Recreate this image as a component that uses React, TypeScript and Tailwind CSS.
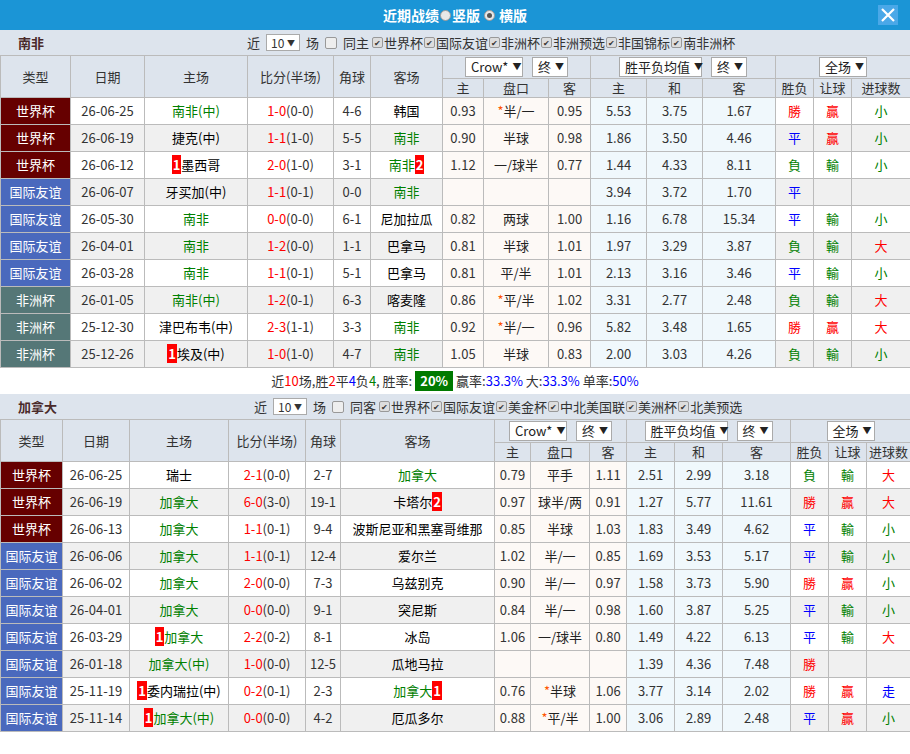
import React from 'react';

type Row = {
  t: string; d: string; h: string; hg?: boolean; hr?: string; ha?: string;
  s: string; hs: string; c: string; a: string; ag?: boolean; ar?: string;
  o1: string; p: string; o2: string; e1: string; e2: string; e3: string;
  r1: string; r2: string; r3: string;
};

const typeBg: Record<string, string> = {
  世界杯: 'bg-[#660000]',
  国际友谊: 'bg-[#4a69bd]',
  非洲杯: 'bg-[#557777]',
};

const resColor: Record<string, string> = {
  勝: 'text-[#f00]', 負: 'text-[#008000]', 平: 'text-[#00f]',
  贏: 'text-[#f00]', 輸: 'text-[#008000]', 走: 'text-[#00f]',
  大: 'text-[#f00]', 小: 'text-[#008000]',
};

const r = (t: string, d: string, h: string, s: string, hs: string, c: string, a: string, odds: string, euro: string, res: string, x: Partial<Row> = {}): Row => {
  const [o1, p, o2] = odds ? odds.split(' ') : ['', '', ''];
  const [e1, e2, e3] = euro.split(' ');
  const [r1 = '', r2 = '', r3 = ''] = res.split(' ');
  return { t, d, h, s, hs, c, a, o1, p, o2, e1, e2, e3, r1, r2, r3, ...x };
};

const rowsA: Row[] = [
  r('世界杯', '26-06-25', '南非(中)', '1-0', '(0-0)', '4-6', '韩国', '0.93 *半/一 0.95', '5.53 3.75 1.67', '勝 贏 小', { hg: true }),
  r('世界杯', '26-06-19', '捷克(中)', '1-1', '(1-0)', '5-5', '南非', '0.90 半球 0.98', '1.86 3.50 4.46', '平 贏 小', { ag: true }),
  r('世界杯', '26-06-12', '墨西哥', '2-0', '(1-0)', '3-1', '南非', '1.12 一/球半 0.77', '1.44 4.33 8.11', '負 輸 小', { ag: true, hr: '1', ar: '2' }),
  r('国际友谊', '26-06-07', '牙买加(中)', '1-1', '(0-1)', '0-0', '南非', '', '3.94 3.72 1.70', '平', { ag: true }),
  r('国际友谊', '26-05-30', '南非', '0-0', '(0-0)', '6-1', '尼加拉瓜', '0.82 两球 1.00', '1.16 6.78 15.34', '平 輸 小', { hg: true }),
  r('国际友谊', '26-04-01', '南非', '1-2', '(0-0)', '1-1', '巴拿马', '0.81 半球 1.01', '1.97 3.29 3.87', '負 輸 大', { hg: true }),
  r('国际友谊', '26-03-28', '南非', '1-1', '(0-1)', '5-1', '巴拿马', '0.81 平/半 1.01', '2.13 3.16 3.46', '平 輸 小', { hg: true }),
  r('非洲杯', '26-01-05', '南非(中)', '1-2', '(0-1)', '6-3', '喀麦隆', '0.86 *平/半 1.02', '3.31 2.77 2.48', '負 輸 大', { hg: true }),
  r('非洲杯', '25-12-30', '津巴布韦(中)', '2-3', '(1-1)', '3-3', '南非', '0.92 *半/一 0.96', '5.82 3.48 1.65', '勝 贏 大', { ag: true }),
  r('非洲杯', '25-12-26', '埃及(中)', '1-0', '(1-0)', '4-7', '南非', '1.05 半球 0.83', '2.00 3.03 4.26', '負 輸 小', { ag: true, hr: '1' }),
];

const rowsB: Row[] = [
  r('世界杯', '26-06-25', '瑞士', '2-1', '(0-0)', '2-7', '加拿大', '0.79 平手 1.11', '2.51 2.99 3.18', '負 輸 大', { ag: true }),
  r('世界杯', '26-06-19', '加拿大', '6-0', '(3-0)', '19-1', '卡塔尔', '0.97 球半/两 0.91', '1.27 5.77 11.61', '勝 贏 大', { hg: true, ar: '2' }),
  r('世界杯', '26-06-13', '加拿大', '1-1', '(0-1)', '9-4', '波斯尼亚和黑塞哥维那', '0.85 半球 1.03', '1.83 3.49 4.62', '平 輸 小', { hg: true }),
  r('国际友谊', '26-06-06', '加拿大', '1-1', '(0-1)', '12-4', '爱尔兰', '1.02 半/一 0.85', '1.69 3.53 5.17', '平 輸 小', { hg: true }),
  r('国际友谊', '26-06-02', '加拿大', '2-0', '(0-0)', '7-3', '乌兹别克', '0.90 半/一 0.97', '1.58 3.73 5.90', '勝 贏 小', { hg: true }),
  r('国际友谊', '26-04-01', '加拿大', '0-0', '(0-0)', '9-1', '突尼斯', '0.84 半/一 0.98', '1.60 3.87 5.25', '平 輸 小', { hg: true }),
  r('国际友谊', '26-03-29', '加拿大', '2-2', '(0-2)', '8-1', '冰岛', '1.06 一/球半 0.80', '1.49 4.22 6.13', '平 輸 大', { hg: true, hr: '1' }),
  r('国际友谊', '26-01-18', '加拿大(中)', '1-0', '(0-0)', '12-5', '瓜地马拉', '', '1.39 4.36 7.48', '勝', { hg: true }),
  r('国际友谊', '25-11-19', '委内瑞拉(中)', '0-2', '(0-1)', '2-3', '加拿大', '0.76 *半球 1.06', '3.77 3.14 2.02', '勝 贏 走', { ag: true, hr: '1', ar: '1' }),
  r('国际友谊', '25-11-14', '加拿大(中)', '0-0', '(0-0)', '4-2', '厄瓜多尔', '0.88 *平/半 1.00', '3.06 2.89 2.48', '平 贏 小', { hg: true, hr: '1' }),
];

function Rank({ n }: { n: string }) {
  return <span className="bg-[#f00] px-[1px] font-bold text-white">{n}</span>;
}

function Sel({ label, w }: { label: string; w: string }) {
  return (
    <span className={`inline-flex h-[20px] items-center justify-between whitespace-nowrap border border-[#aaa] bg-white px-[5px] text-[13px] text-[#222] ${w}`}>
      <span>{label}</span>
      <span className="ml-1 text-[9px]">▼</span>
    </span>
  );
}

function Check({ label }: { label: string }) {
  return (
    <span className="inline-flex items-center whitespace-nowrap">
      <span className="mr-[1px] inline-flex h-[11px] w-[11px] items-center justify-center rounded-[2px] border border-[#999] bg-[#ddd] text-[8px] leading-none text-[#333]">✔</span>
      {label}
    </span>
  );
}

function FilterBar({ team, same, cups, ml }: { team: string; same: string; cups: string[]; ml: string }) {
  return (
    <div className="flex h-[25px] items-center bg-[#dde4ed] text-[13px] text-[#333]">
      <span className="ml-[18px] w-[60px] font-bold text-[#4a2a2a]">{team}</span>
      <div className={`flex items-center gap-[1px] ${ml}`}>
        <span>近</span>
        <span className="mx-[5px] inline-flex h-[17px] w-[34px] items-center justify-between border border-[#aaa] bg-white px-1 text-[12px]">10<span className="text-[8px]">▼</span></span>
        <span>场</span>
        <span className="mx-[5px] inline-block h-[12px] w-[12px] rounded-[2px] border border-[#999] bg-[#eee]" />
        <span className="mr-[2px]">{same}</span>
        {cups.map((c) => <Check key={c} label={c} />)}
      </div>
    </div>
  );
}

function Table({ rows, widths }: { rows: Row[]; widths: number[] }) {
  const th = 'border border-[#bbb] bg-[#dde4ed] p-0 font-normal text-[#333]';
  const td = 'border border-[#bbb] p-0 text-center whitespace-nowrap';
  return (
    <table className="w-full table-fixed border-collapse text-[13px] leading-[18px]">
      <colgroup>
        {widths.map((w, i) => <col key={i} style={{ width: w }} />)}
      </colgroup>
      <thead>
        <tr className="h-[23px]">
          {['类型', '日期', '主场', '比分(半场)', '角球', '客场'].map((h) => (
            <th key={h} rowSpan={2} className={th}>{h}</th>
          ))}
          <th colSpan={3} className={th}>
            <div className="flex justify-center gap-[9px]"><Sel label="Crow*" w="w-[58px]" /><Sel label="终" w="w-[36px]" /></div>
          </th>
          <th colSpan={3} className={th}>
            <div className="flex justify-center gap-[9px]"><Sel label="胜平负均值" w="w-[83px]" /><Sel label="终" w="w-[36px]" /></div>
          </th>
          <th colSpan={3} className={th}>
            <div className="flex justify-center"><Sel label="全场" w="w-[48px]" /></div>
          </th>
        </tr>
        <tr className="h-[17px]">
          {['主', '盘口', '客', '主', '和', '客', '胜负', '让球', '进球数'].map((h, i) => (
            <th key={i} className={th}>{h}</th>
          ))}
        </tr>
      </thead>
      <tbody>
        {rows.map((x, i) => {
          const bg = i % 2 ? 'bg-[#f0f0f0]' : 'bg-white';
          return (
            <tr key={i} className={`h-[27px] ${bg}`}>
              <td className={`${td} ${typeBg[x.t]} text-white`}>{x.t}</td>
              <td className={`${td} text-[#333]`}>{x.d}</td>
              <td className={`${td} ${x.hg ? 'text-[#008000]' : 'text-black'}`}>{x.hr && <Rank n={x.hr} />}{x.h}</td>
              <td className={`${td} text-[#333]`}><span className="text-[#f00]">{x.s}</span>{x.hs}</td>
              <td className={`${td} text-[#333]`}>{x.c}</td>
              <td className={`${td} ${x.ag ? 'text-[#008000]' : 'text-black'}`}>{x.a}{x.ar && <Rank n={x.ar} />}</td>
              <td className={`${td} bg-[#fdf9f6] text-[#333]`}>{x.o1}</td>
              <td className={`${td} bg-[#fdf9f6] text-[#222]`}>
                {x.p.startsWith('*') ? <><span className="text-[#f50]">*</span>{x.p.slice(1)}</> : x.p}
              </td>
              <td className={`${td} bg-[#fdf9f6] text-[#333]`}>{x.o2}</td>
              <td className={`${td} bg-[#f0f8fc] text-[#333]`}>{x.e1}</td>
              <td className={`${td} bg-[#f0f8fc] text-[#333]`}>{x.e2}</td>
              <td className={`${td} bg-[#f0f8fc] text-[#333]`}>{x.e3}</td>
              <td className={`${td} ${resColor[x.r1]}`}>{x.r1}</td>
              <td className={`${td} ${resColor[x.r2]}`}>{x.r2}</td>
              <td className={`${td} ${resColor[x.r3]}`}>{x.r3}</td>
            </tr>
          );
        })}
      </tbody>
    </table>
  );
}

export default function App() {
  return (
    <div className="w-[910px] bg-white" style={{ fontFamily: '"Noto Sans CJK SC", "Noto Sans", sans-serif' }}>
      <div className="relative flex h-[30px] items-center justify-center bg-[#1b95d6] text-[14px] text-white">
        <span className="font-bold">近期战绩</span>
        <span className="mx-[1px] inline-block h-[11px] w-[11px] rounded-full border border-[#999] bg-[#e8e8e8]" />
        <span className="mr-1 font-bold">竖版</span>
        <span className="mr-1 inline-flex h-[11px] w-[11px] items-center justify-center rounded-full border border-[#999] bg-[#e8e8e8]">
          <span className="h-[5px] w-[5px] rounded-full bg-[#555]" />
        </span>
        <span className="font-bold">横版</span>
        <span className="absolute right-[12px] top-[5px] flex h-[20px] w-[20px] items-center justify-center bg-[#4aa8e8]">
          <svg width="14" height="14" viewBox="0 0 14 14"><path d="M1 1L13 13M13 1L1 13" stroke="white" strokeWidth="2.2" /></svg>
        </span>
      </div>
      <FilterBar team="南非" same="同主" ml="ml-[169px]" cups={['世界杯', '国际友谊', '非洲杯', '非洲预选', '非国锦标', '南非洲杯']} />
      <Table rows={rowsA} widths={[70, 74, 103, 86, 37, 72, 41, 65, 42, 56, 56, 73, 38, 38, 59]} />
      <div className="flex h-[26px] items-center justify-center text-[13px] text-[#333]">
        近<span className="text-[#f00]">10</span>场,胜<span className="text-[#f00]">2</span>平<span className="text-[#00f]">4</span>负<span className="text-[#008000]">4</span>, 胜率:
        <span className="mx-[3px] bg-[#007a00] px-[5px] font-bold text-white">20%</span>
        赢率:<span className="text-[#00f]">33.3%</span>&nbsp;大:<span className="text-[#00f]">33.3%</span>&nbsp;单率:<span className="text-[#00f]">50%</span>
      </div>
      <FilterBar team="加拿大" same="同客" ml="ml-[176px]" cups={['世界杯', '国际友谊', '美金杯', '中北美国联', '美洲杯', '北美预选']} />
      <Table rows={rowsB} widths={[62, 67, 99, 77, 35, 154, 36, 59, 37, 48, 48, 68, 38, 38, 44]} />
    </div>
  );
}
